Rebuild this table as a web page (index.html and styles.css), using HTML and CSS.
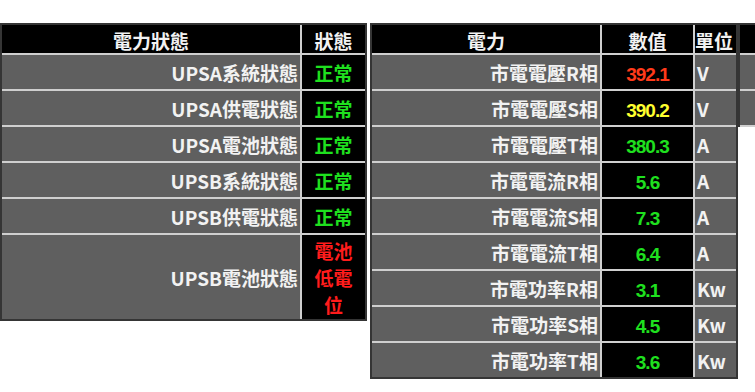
FILE: index.html
```html
<!DOCTYPE html>
<html lang="zh-Hant">
<head>
<meta charset="utf-8">
<title>電力狀態</title>
<link rel="stylesheet" href="styles.css">
</head>
<body>
<div class="page">
  <div class="panel panel-status">
    <div class="cell head">電力狀態</div>
    <div class="cell head">狀態</div>
    <div class="cell name">UPSA系統狀態</div>
    <div class="cell state ok">正常</div>
    <div class="cell name">UPSA供電狀態</div>
    <div class="cell state ok">正常</div>
    <div class="cell name">UPSA電池狀態</div>
    <div class="cell state ok">正常</div>
    <div class="cell name">UPSB系統狀態</div>
    <div class="cell state ok">正常</div>
    <div class="cell name">UPSB供電狀態</div>
    <div class="cell state ok">正常</div>
    <div class="cell name last">UPSB電池狀態</div>
    <div class="cell state bad last">電池低電位</div>
  </div>

  <div class="panel panel-power">
    <div class="cell head">電力</div>
    <div class="cell head">數值</div>
    <div class="cell head unit-head">單位</div>
    <div class="cell name">市電電壓R相</div>
    <div class="cell value red">392.1</div>
    <div class="cell unit">V</div>
    <div class="cell name">市電電壓S相</div>
    <div class="cell value yellow">390.2</div>
    <div class="cell unit">V</div>
    <div class="cell name">市電電壓T相</div>
    <div class="cell value green">380.3</div>
    <div class="cell unit">A</div>
    <div class="cell name">市電電流R相</div>
    <div class="cell value green">5.6</div>
    <div class="cell unit">A</div>
    <div class="cell name">市電電流S相</div>
    <div class="cell value green">7.3</div>
    <div class="cell unit">A</div>
    <div class="cell name">市電電流T相</div>
    <div class="cell value green">6.4</div>
    <div class="cell unit">A</div>
    <div class="cell name">市電功率R相</div>
    <div class="cell value green">3.1</div>
    <div class="cell unit">Kw</div>
    <div class="cell name">市電功率S相</div>
    <div class="cell value green">4.5</div>
    <div class="cell unit">Kw</div>
    <div class="cell name last">市電功率T相</div>
    <div class="cell value green last">3.6</div>
    <div class="cell unit last">Kw</div>
  </div>

  <div class="panel panel-extra">
    <div class="cell head"></div>
    <div class="cell name"></div>
    <div class="cell name"></div>
  </div>
</div>
</body>
</html>
```

FILE: styles.css
```css
html, body {
  margin: 0;
  padding: 0;
  background: #ffffff;
  overflow: hidden;
}

.page {
  display: flex;
  align-items: flex-start;
  padding-top: 23px;
  width: 755px;
  overflow: hidden;
  font-family: "Noto Sans CJK TC", "Noto Sans CJK SC", sans-serif;
  font-weight: 700;
  font-size: 19px;
  color: #f2f2f2;
}

.panel {
  display: grid;
  flex-shrink: 0;
  border: 2px solid #353535;
  background: #5f5f5f;
}

.panel-status {
  grid-template-columns: 300px 63px;
  grid-template-rows: 30px repeat(5, 36px) 84px;
}

.panel-power {
  margin-left: 3px;
  grid-template-columns: 230px 93px 41px;
  grid-template-rows: 30px repeat(8, 36px) 34px;
}

.panel-extra {
  grid-template-columns: 120px;
  grid-template-rows: 30px 36px 36px;
  border-right: none;
  border-bottom: none;
}

.cell {
  box-sizing: border-box;
  display: flex;
  align-items: center;
  border-right: 2px solid #cfcfcf;
  border-bottom: 2px solid #cfcfcf;
  line-height: 27px;
  white-space: nowrap;
}

.panel-status .cell:nth-child(2n),
.panel-power .cell:nth-child(3n),
.panel-extra .cell {
  border-right: none;
}

.cell.last {
  border-bottom: none;
}

.head {
  background: #000000;
  justify-content: center;
  padding-top: 3px;
}

.unit-head {
  justify-content: flex-start;
  padding-left: 0;
}

.name {
  background: #5f5f5f;
  justify-content: flex-end;
  padding-right: 2px;
}

.state {
  background: #000000;
  justify-content: center;
  text-align: center;
  padding: 0 4px;
  white-space: normal;
}

.ok {
  color: #1fe01f;
}

.bad {
  color: #ff1c1c;
}

.value {
  background: #000000;
  justify-content: center;
  padding-top: 4px;
  font-family: "Liberation Sans", sans-serif;
  font-weight: 700;
  font-size: 19px;
  letter-spacing: -1px;
}

.red {
  color: #ff3a1a;
}

.yellow {
  color: #ffff2e;
}

.green {
  color: #1fe01f;
}

.unit {
  background: #5f5f5f;
  justify-content: flex-start;
  padding-left: 2px;
}
```
